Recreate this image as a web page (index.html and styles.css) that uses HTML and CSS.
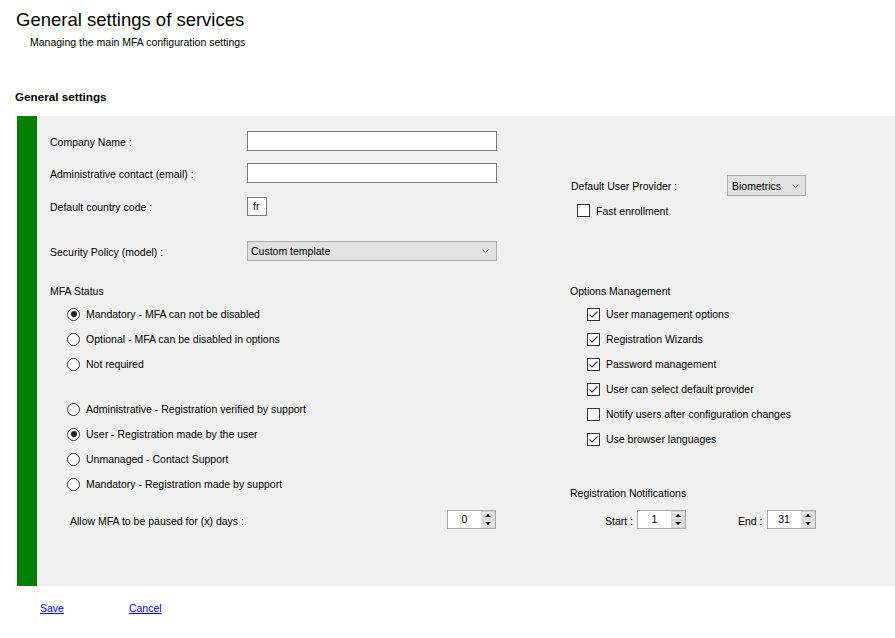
FILE: index.html
```html
<!DOCTYPE html>
<html>
<head>
<meta charset="utf-8">
<link rel="stylesheet" href="styles.css">
</head>
<body>
<div class="page">
  <h1 class="title">General settings of services</h1>
  <p class="subtitle">Managing the main MFA configuration settings</p>
  <h2 class="section">General settings</h2>
  <div class="panel">
    <div class="bar"></div>
    <div class="content">
      <div class="col-left">
        <div class="field-row">
          <span class="label">Company Name :</span>
          <span class="textbox wide"></span>
        </div>
        <div class="field-row r2">
          <span class="label">Administrative contact (email) :</span>
          <span class="textbox wide"></span>
        </div>
        <div class="field-row r3">
          <span class="label">Default country code :</span>
          <span class="textbox small">fr</span>
        </div>
        <div class="field-row r4">
          <span class="label">Security Policy (model) :</span>
          <span class="select wide"><span class="sel-text">Custom template</span><svg class="chev" width="7" height="4" viewBox="0 0 7 4"><polyline points="0.5,0.5 3.5,3.5 6.5,0.5" fill="none" stroke="#555" stroke-width="1"/></svg></span>
        </div>

        <div class="group-label mfa">MFA Status</div>
        <div class="opt-list first">
          <div class="opt"><span class="radio on"></span>Mandatory - MFA can not be disabled</div>
          <div class="opt"><span class="radio"></span>Optional - MFA can be disabled in options</div>
          <div class="opt"><span class="radio"></span>Not required</div>
        </div>
        <div class="opt-list second">
          <div class="opt"><span class="radio"></span>Administrative - Registration verified by support</div>
          <div class="opt"><span class="radio on"></span>User - Registration made by the user</div>
          <div class="opt"><span class="radio"></span>Unmanaged - Contact Support</div>
          <div class="opt"><span class="radio"></span>Mandatory - Registration made by support</div>
        </div>
        <div class="pause-row">
          <span class="low">Allow MFA to be paused for (x) days :</span>
          <span class="spin pause-spin"><span class="spin-val">0</span><span class="spin-btns"><span class="sbtn"><span class="up"></span></span><span class="sbtn"><span class="down"></span></span></span></span>
        </div>
      </div>

      <div class="col-right">
        <div class="field-row provider">
          <span class="label-r">Default User Provider :</span>
          <span class="select bio"><span class="sel-text">Biometrics</span><svg class="chev" width="7" height="4" viewBox="0 0 7 4"><polyline points="0.5,0.5 3.5,3.5 6.5,0.5" fill="none" stroke="#555" stroke-width="1"/></svg></span>
        </div>
        <div class="opt fast"><span class="check"></span><span class="nudge">Fast enrollment</span></div>

        <div class="group-label opts">Options Management</div>
        <div class="opt-list first">
          <div class="opt"><span class="check"><svg width="11" height="11" viewBox="0 0 11 11"><polyline points="1.5,5.5 4,8 9.5,2.5" fill="none" stroke="#333" stroke-width="1.2"/></svg></span>User management options</div>
          <div class="opt"><span class="check"><svg width="11" height="11" viewBox="0 0 11 11"><polyline points="1.5,5.5 4,8 9.5,2.5" fill="none" stroke="#333" stroke-width="1.2"/></svg></span>Registration Wizards</div>
          <div class="opt"><span class="check"><svg width="11" height="11" viewBox="0 0 11 11"><polyline points="1.5,5.5 4,8 9.5,2.5" fill="none" stroke="#333" stroke-width="1.2"/></svg></span>Password management</div>
          <div class="opt"><span class="check"><svg width="11" height="11" viewBox="0 0 11 11"><polyline points="1.5,5.5 4,8 9.5,2.5" fill="none" stroke="#333" stroke-width="1.2"/></svg></span>User can select default provider</div>
          <div class="opt"><span class="check"></span>Notify users after configuration changes</div>
          <div class="opt"><span class="check"><svg width="11" height="11" viewBox="0 0 11 11"><polyline points="1.5,5.5 4,8 9.5,2.5" fill="none" stroke="#333" stroke-width="1.2"/></svg></span>Use browser languages</div>
        </div>

        <div class="group-label regs">Registration Notifications</div>
        <div class="notif-row">
          <span class="nlabel low">Start :</span>
          <span class="spin"><span class="spin-val">1</span><span class="spin-btns"><span class="sbtn"><span class="up"></span></span><span class="sbtn"><span class="down"></span></span></span></span>
          <span class="nlabel end low">End :</span>
          <span class="spin"><span class="spin-val">31</span><span class="spin-btns"><span class="sbtn"><span class="up"></span></span><span class="sbtn"><span class="down"></span></span></span></span>
        </div>
      </div>
    </div>
  </div>
  <div class="actions">
    <a href="#" class="link">Save</a>
    <a href="#" class="link cancel">Cancel</a>
  </div>
</div>
</body>
</html>
```

FILE: styles.css
```css
html, body {
  margin: 0;
  padding: 0;
  background: #fff;
}
body {
  font-family: "Liberation Sans", Arial, sans-serif;
  font-size: 10.5px;
  line-height: 13px;
  color: #000;
}
.page {
  width: 895px;
  overflow: hidden;
}
.title {
  margin: 9px 0 0 16px;
  font-size: 18.5px;
  line-height: 22px;
  font-weight: normal;
}
.subtitle {
  margin: 5px 0 0 30px;
  font-size: 10.5px;
  line-height: 13px;
}
.section {
  margin: 41px 0 0 15px;
  font-size: 11.7px;
  line-height: 14px;
  font-weight: bold;
}
.panel {
  margin: 12px 0 0 17px;
  height: 470px;
  display: flex;
  background: #f0f0f0;
}
.bar {
  width: 20px;
  background: #008000;
  flex: none;
}
.content {
  display: flex;
  padding-left: 13px;
}
.col-left {
  width: 447px;
  padding-top: 15px;
  display: flex;
  flex-direction: column;
}
.col-right {
  margin-left: 73px;
  padding-top: 59px;
  display: flex;
  flex-direction: column;
  width: 280px;
}
.field-row {
  display: flex;
  align-items: center;
  height: 20px;
}
.field-row.r2 { margin-top: 12px; }
.field-row.r3 { margin-top: 13px; }
.field-row.r4 { margin-top: 25px; }
.label {
  width: 197px;
  flex: none;
  padding-top: 2px;
}
.textbox {
  box-sizing: border-box;
  height: 20px;
  background: #fff;
  border: 1px solid #7a7a7a;
  padding: 2px 4px 0 4px;
  line-height: 15px;
}
.textbox.wide { width: 250px; }
.textbox.small { width: 20px; height: 19px; padding: 1px 0 0 5px; }
.select {
  box-sizing: border-box;
  display: flex;
  align-items: center;
  justify-content: space-between;
  height: 20px;
  background: #e1e1e1;
  border: 1px solid #adadad;
  padding: 0 7px 0 3px;
}
.sel-text { padding-top: 1px; }
.select.wide { width: 250px; }
.select.bio { width: 79px; height: 21px; padding: 0 6px 0 4px; }
.chev { display: block; flex: none; }
.label-r {
  width: 156px;
  flex: none;
  padding-left: 1px;
  padding-top: 2px;
}
.provider { height: 21px; }
.group-label {
  line-height: 13px;
}
.group-label.mfa { margin-top: 23.5px; }
.group-label.opts { margin-top: 67.5px; }
.group-label.regs { margin-top: 35px; }
.opt-list {
  display: flex;
  flex-direction: column;
  padding-left: 17px;
}
.opt-list.first { margin-top: 4px; }
.opt-list.second { margin-top: 20px; }
.opt {
  display: flex;
  align-items: center;
  height: 25px;
  white-space: nowrap;
}
.opt.fast {
  height: 13px;
  margin-top: 8px;
  padding-left: 7px;
}
.nudge { padding-top: 2px; }
.radio {
  box-sizing: border-box;
  width: 13px;
  height: 13px;
  border: 1px solid #333;
  border-radius: 50%;
  background: #fff;
  margin-right: 6px;
  flex: none;
  display: flex;
  align-items: center;
  justify-content: center;
}
.radio.on::after {
  content: "";
  width: 6px;
  height: 6px;
  border-radius: 50%;
  background: #222;
}
.check {
  box-sizing: border-box;
  width: 13px;
  height: 13px;
  border: 1px solid #333;
  background: #fff;
  margin-right: 6px;
  flex: none;
  display: flex;
  align-items: center;
  justify-content: center;
}
.check svg { display: block; }
.pause-row {
  display: flex;
  align-items: center;
  justify-content: space-between;
  height: 19px;
  margin-top: 13.5px;
  padding-left: 20px;
  padding-right: 1px;
}
.low { padding-top: 4px; }
.spin {
  box-sizing: border-box;
  width: 49px;
  height: 19px;
  border: 1px solid #ababab;
  background: #fff;
  display: flex;
  flex: none;
}
.spin-val {
  flex: 1;
  text-align: center;
  line-height: 17px;
}
.spin-btns {
  width: 14px;
  display: flex;
  flex-direction: column;
}
.sbtn {
  flex: 1;
  box-sizing: border-box;
  background: #e6e6e6;
  border: 1px solid #d4d4d4;
  display: flex;
  align-items: center;
  justify-content: center;
}
.up {
  width: 0;
  height: 0;
  border-left: 3px solid transparent;
  border-right: 3px solid transparent;
  border-bottom: 3px solid #000;
}
.down {
  width: 0;
  height: 0;
  border-left: 3px solid transparent;
  border-right: 3px solid transparent;
  border-top: 3px solid #000;
}
.notif-row {
  display: flex;
  align-items: center;
  height: 19px;
  margin-top: 10.5px;
  padding-left: 35px;
}
.nlabel { margin-right: 4px; }
.nlabel.end { margin-left: 52px; }
.actions {
  display: flex;
  margin-top: 15.5px;
  padding-left: 40px;
  line-height: 13px;
}
.link {
  color: #0000ff;
  text-decoration: underline;
}
.link.cancel { margin-left: 65px; }
```
